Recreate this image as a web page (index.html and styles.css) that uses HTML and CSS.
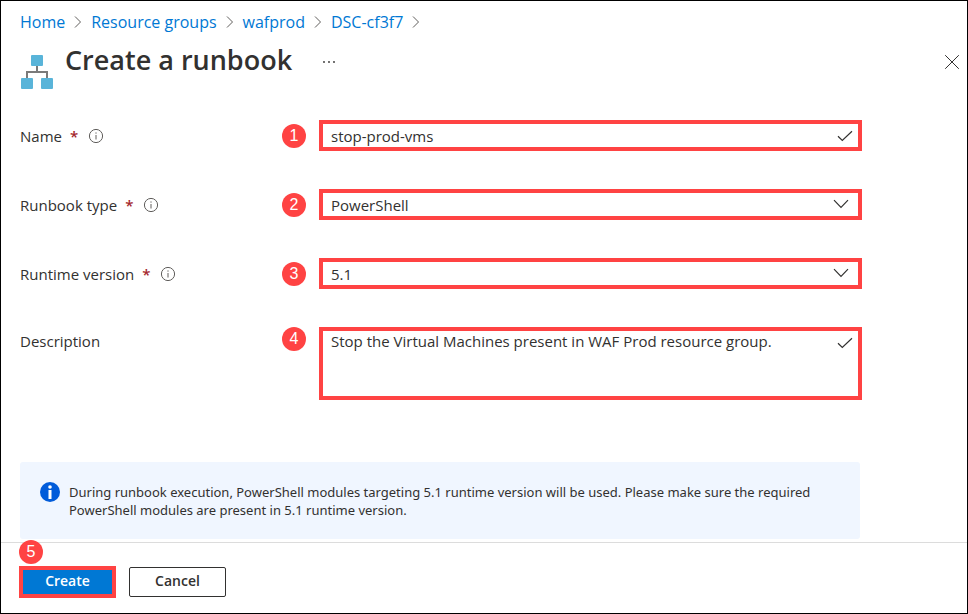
FILE: index.html
```html
<!DOCTYPE html>
<html lang="en">
<head>
<meta charset="utf-8">
<meta name="viewport" content="width=device-width, initial-scale=1">
<title>Create a runbook</title>
<link rel="stylesheet" href="styles.css">
</head>
<body>
<form class="blade">
  <nav class="crumbs" aria-label="Breadcrumb">
    <a href="#">Home</a>
    <svg class="sep" viewBox="0 0 8 14" aria-hidden="true"><path d="M1 1.5 6.5 7 1 12.5"/></svg>
    <a href="#">Resource groups</a>
    <svg class="sep" viewBox="0 0 8 14" aria-hidden="true"><path d="M1 1.5 6.5 7 1 12.5"/></svg>
    <a href="#">wafprod</a>
    <svg class="sep" viewBox="0 0 8 14" aria-hidden="true"><path d="M1 1.5 6.5 7 1 12.5"/></svg>
    <a href="#">DSC-cf3f7</a>
    <svg class="sep" viewBox="0 0 8 14" aria-hidden="true"><path d="M1 1.5 6.5 7 1 12.5"/></svg>
  </nav>

  <header class="header">
    <svg class="logo" viewBox="0 0 32 34" aria-hidden="true">
      <path d="M16 11v6M6 23v-6h20v6" fill="none" stroke="#7a7a7a" stroke-width="2"/>
      <g fill="#59b4d9">
        <rect x="10" y="0" width="12" height="11" rx="1"/>
        <rect x="0" y="23" width="12" height="11" rx="1"/>
        <rect x="20" y="23" width="12" height="11" rx="1"/>
      </g>
    </svg>
    <h1>Create a runbook</h1>
    <button class="icon-button more" type="button" aria-label="More">
      <svg viewBox="0 0 14 4"><circle cx="2" cy="2" r="0.9"/><circle cx="7" cy="2" r="0.9"/><circle cx="12" cy="2" r="0.9"/></svg>
    </button>
    <button class="icon-button close" type="button" aria-label="Close">
      <svg viewBox="0 0 16 16"><path d="M1.2 1.2 14.8 14.8M14.8 1.2 1.2 14.8"/></svg>
    </button>
  </header>

  <main class="content">
    <div class="row">
      <div class="label">
        <label for="name">Name</label><span class="required">*</span>
        <svg class="hint" viewBox="0 0 16 16" aria-hidden="true"><circle cx="8" cy="8" r="6.6"/><path d="M8 7v4.5M8 4.4v1.3"/></svg>
      </div>
      <span class="step">1</span>
      <div class="field">
        <input id="name" type="text" value="stop-prod-vms">
        <svg class="check" viewBox="0 0 16 12" aria-hidden="true"><path d="M1 6.3 5.3 10.4 15 1.2"/></svg>
      </div>
    </div>
    <div class="row">
      <div class="label">
        <label for="type">Runbook type</label><span class="required">*</span>
        <svg class="hint" viewBox="0 0 16 16" aria-hidden="true"><circle cx="8" cy="8" r="6.6"/><path d="M8 7v4.5M8 4.4v1.3"/></svg>
      </div>
      <span class="step">2</span>
      <div class="field">
        <select id="type"><option>PowerShell</option></select>
        <svg class="chevron" viewBox="0 0 16 10" aria-hidden="true"><path d="M1 1.2 8 8.3 15 1.2"/></svg>
      </div>
    </div>
    <div class="row">
      <div class="label">
        <label for="version">Runtime version</label><span class="required">*</span>
        <svg class="hint" viewBox="0 0 16 16" aria-hidden="true"><circle cx="8" cy="8" r="6.6"/><path d="M8 7v4.5M8 4.4v1.3"/></svg>
      </div>
      <span class="step">3</span>
      <div class="field">
        <select id="version"><option>5.1</option></select>
        <svg class="chevron" viewBox="0 0 16 10" aria-hidden="true"><path d="M1 1.2 8 8.3 15 1.2"/></svg>
      </div>
    </div>
    <div class="row row-top">
      <div class="label"><label for="description">Description</label></div>
      <span class="step">4</span>
      <div class="field">
        <textarea id="description" rows="3">Stop the Virtual Machines present in WAF Prod resource group.</textarea>
        <svg class="check" viewBox="0 0 16 12" aria-hidden="true"><path d="M1 6.3 5.3 10.4 15 1.2"/></svg>
      </div>
    </div>

    <div class="notice">
      <svg class="info" viewBox="0 0 20 20" aria-hidden="true">
        <circle cx="10" cy="10" r="10" fill="#015cda"/>
        <circle cx="10" cy="5" r="1.8" fill="#fff"/>
        <rect x="8.5" y="8" width="3" height="9" fill="#fff"/>
      </svg>
      <p>During runbook execution, PowerShell modules targeting 5.1 runtime version will be used. Please make sure the required PowerShell modules are present in 5.1 runtime version.</p>
    </div>
  </main>

  <footer class="footer">
    <div class="create-wrap">
      <span class="step step-over">5</span>
      <button class="button primary" type="submit">Create</button>
    </div>
    <button class="button" type="button">Cancel</button>
  </footer>
</form>
</body>
</html>
```
FILE: styles.css
```css
* {
  box-sizing: border-box;
}

body {
  margin: 0;
  background: #fff;
  color: #323130;
  font: 15px/20px "Open Sans", "Noto Sans", sans-serif;
}

input,
select,
textarea,
button {
  color: inherit;
  font: inherit;
}

svg {
  flex: none;
}

.blade {
  display: flex;
  flex-direction: column;
  min-height: 100vh;
  border: 1px solid #000;
}

.crumbs {
  display: flex;
  align-items: center;
  gap: 9px;
  padding: 9px 19px 0;
  font-size: 16px;
  line-height: 24px;
}

.crumbs a {
  color: #0078d4;
  text-decoration: none;
}

.sep {
  width: 8px;
  height: 14px;
  fill: none;
  stroke: #605e5c;
}

.header {
  display: flex;
  align-items: flex-start;
  padding: 8px 7px 0 20px;
}

.logo {
  width: 32px;
  height: 34px;
  margin-top: 13px;
}

.header h1 {
  margin: 0 0 0 12px;
  font-size: 27px;
  font-weight: 600;
  line-height: 36px;
}

.icon-button {
  display: flex;
  padding: 0;
  border: 0;
  background: none;
}

.more {
  margin: 18px 0 0 30px;
}

.more svg {
  width: 14px;
  height: 4px;
  fill: #323130;
}

.close {
  margin: 12px 0 0 auto;
}

.close svg {
  width: 16px;
  height: 16px;
  stroke: #323130;
}

.content {
  display: flex;
  flex: 1;
  flex-direction: column;
  gap: 38px;
  max-width: 861px;
  padding: 31px 0 3px 19px;
}

.row {
  display: grid;
  grid-template-columns: 262px 24px 1fr;
  align-items: center;
}

.label {
  display: flex;
  align-items: center;
  line-height: 28px;
}

.required {
  margin: 0 10px 0 8px;
  color: #a4262c;
  font-weight: 600;
}

.hint {
  width: 16px;
  height: 16px;
  fill: none;
  stroke: #605e5c;
}

.step {
  display: block;
  width: 24px;
  height: 24px;
  border-radius: 50%;
  background: #ff4343;
  color: #fff;
  font: 16px/24px "Liberation Sans", sans-serif;
  text-align: center;
}

.field {
  position: relative;
  display: flex;
  margin-left: 13px;
}

.field input,
.field select,
.field textarea {
  width: 100%;
  height: 31px;
  margin: 0;
  padding: 0 36px 0 8px;
  border: 4px solid #ff4343;
  border-radius: 0;
  background: #fff;
  appearance: none;
  resize: none;
}

.field textarea {
  height: 73px;
}

.row-top {
  align-items: start;
}

.check,
.chevron {
  position: absolute;
  right: 9px;
  top: 10px;
  width: 16px;
  height: 12px;
  fill: none;
  stroke: #323130;
  stroke-width: 1.2;
  pointer-events: none;
}

.chevron {
  right: 13px;
  height: 10px;
}

.notice {
  display: flex;
  gap: 9px;
  margin: 24px 2px 0 0;
  padding: 20px;
  border-radius: 3px;
  background: #f0f6ff;
  font-family: "Noto Sans", "Open Sans", sans-serif;
  font-size: 13px;
  line-height: 18px;
}

.notice p {
  margin: 1px 0 0;
}

.info {
  width: 20px;
  height: 20px;
}

.footer {
  display: flex;
  align-items: center;
  gap: 13px;
  padding: 23px 18px 15px;
  border-top: 1px solid #dcdcdc;
}

.create-wrap {
  position: relative;
}

.step-over {
  position: absolute;
  bottom: 100%;
  left: 0;
  margin-bottom: 2px;
}

.button {
  display: block;
  width: 97px;
  height: 30px;
  padding: 0 0 2px;
  border: 1px solid #323130;
  border-radius: 2px;
  background: #fff;
  font-size: 14px;
  font-weight: 600;
}

.primary {
  height: 32px;
  border: 4px solid #ff4343;
  border-radius: 0;
  background: #0078d4;
  color: #fff;
}
```
